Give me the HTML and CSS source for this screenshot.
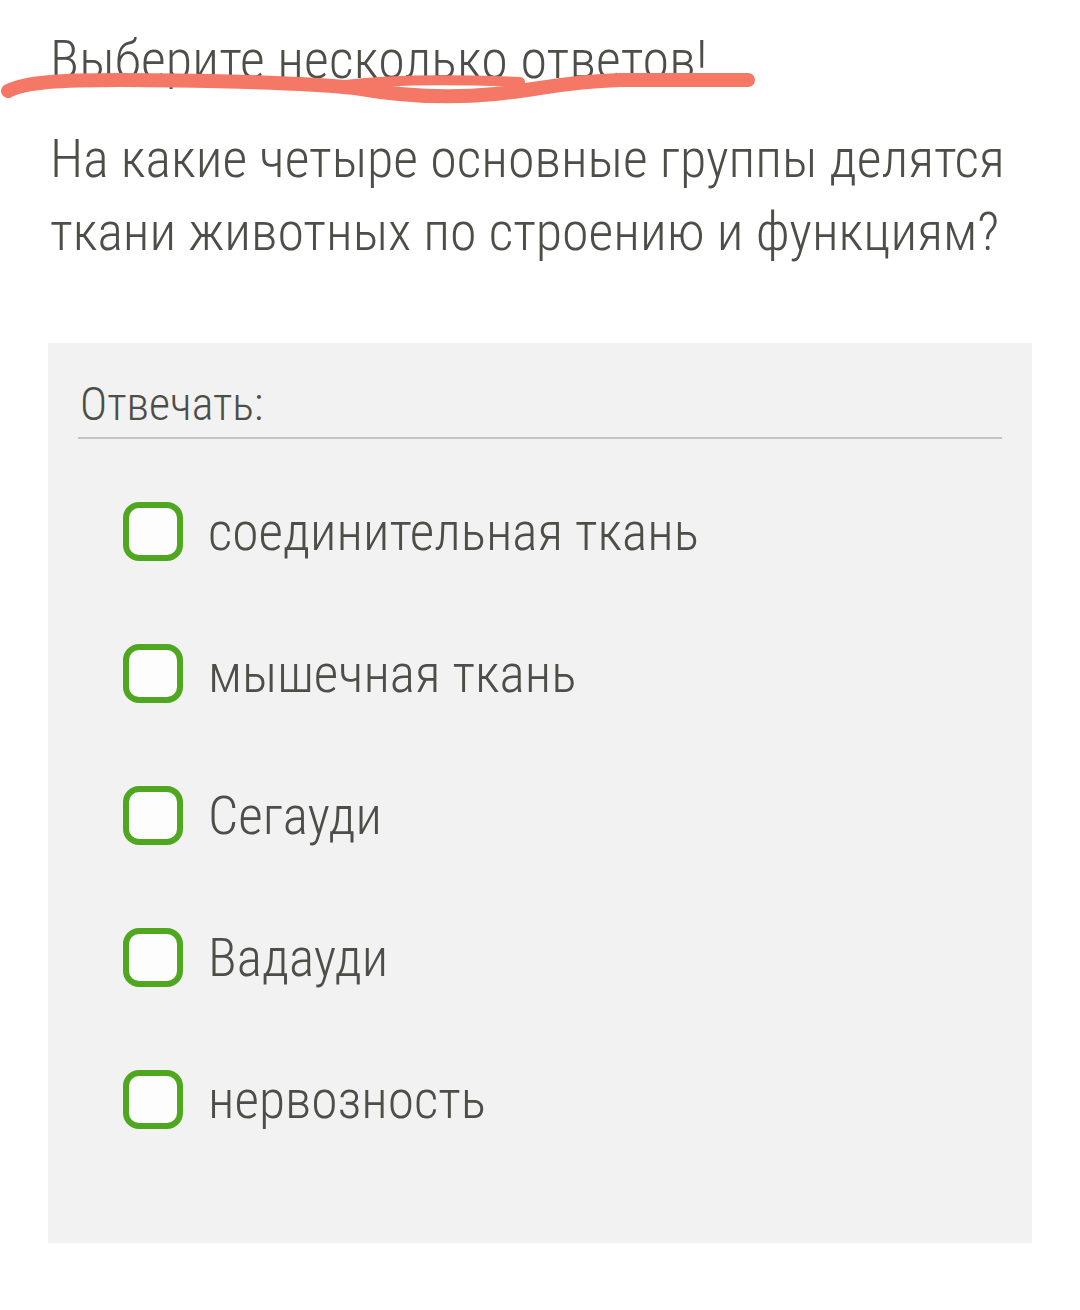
FILE: index.html
```
<!DOCTYPE html>
<html lang="ru">
<head>
<meta charset="utf-8">
<link rel="stylesheet" href="styles.css">
</head>
<body>
<div class="page">
  <div class="instruction">
    <span class="instruction-text">Выберите несколько ответов!</span>
    <svg class="scribble" width="780" height="40" viewBox="0 65 780 40" xmlns="http://www.w3.org/2000/svg">
      <path d="M8 91 C 25 82, 60 80, 120 80 S 300 82, 355 88 C 395 95, 445 99, 495 94 S 560 82, 620 80 L 748 80" fill="none" stroke="#f57866" stroke-width="14" stroke-linecap="round" stroke-linejoin="round"/>
      <path d="M345 85 C 385 80, 450 79, 520 82" fill="none" stroke="#f57866" stroke-width="10" stroke-linecap="round"/>
    </svg>
  </div>
  <p class="question">На какие четыре основные группы делятся ткани животных по строению и функциям?</p>
  <div class="panel">
    <div class="answer-label">Отвечать:</div>
    <ul class="options">
      <li class="option"><span class="box"></span><span class="option-text">соединительная ткань</span></li>
      <li class="option"><span class="box"></span><span class="option-text">мышечная ткань</span></li>
      <li class="option"><span class="box"></span><span class="option-text">Сегауди</span></li>
      <li class="option"><span class="box"></span><span class="option-text">Вадауди</span></li>
      <li class="option"><span class="box"></span><span class="option-text">нервозность</span></li>
    </ul>
  </div>
</div>
</body>
</html>
```
FILE: styles.css
```
html, body {
  margin: 0;
  padding: 0;
  background: #ffffff;
}
body {
  font-family: "Roboto", "Liberation Sans", sans-serif;
  font-weight: 300;
  font-stretch: condensed;
  color: #4e4e48;
  width: 1080px;
  height: 1310px;
  overflow: hidden;
}
.page {
  display: flex;
  flex-direction: column;
}
.instruction {
  position: relative;
  padding: 30px 0 0 50px;
  font-size: 54px;
  line-height: 60px;
  letter-spacing: 0.2px;
}
.scribble {
  position: absolute;
  left: 0;
  top: 65px;
}
.question {
  margin: 32px 0 0 0;
  padding: 0 50px;
  font-size: 54px;
  line-height: 73px;
  letter-spacing: 0;
}
.panel {
  margin: 75px 48px 0 48px;
  background: #f2f2f2;
  padding: 36px 30px 114px 30px;
}
.answer-label {
  font-size: 46px;
  line-height: 50px;
  padding: 0 0 8px 2px;
  border-bottom: 2px solid #c4c4c4;
  letter-spacing: 0;
}
.options {
  list-style: none;
  margin: 63px 0 0 0;
  padding: 0 0 0 45px;
  display: flex;
  flex-direction: column;
  gap: 83px;
}
.option {
  display: flex;
  align-items: center;
  gap: 25px;
  height: 59px;
}
.box {
  box-sizing: border-box;
  width: 60px;
  height: 59px;
  border: 6px solid #4fa71f;
  border-radius: 16px;
  background: #fdfdfd;
  flex: none;
}
.option-text {
  font-size: 53.5px;
  line-height: 60px;
  letter-spacing: 0;
}
```
